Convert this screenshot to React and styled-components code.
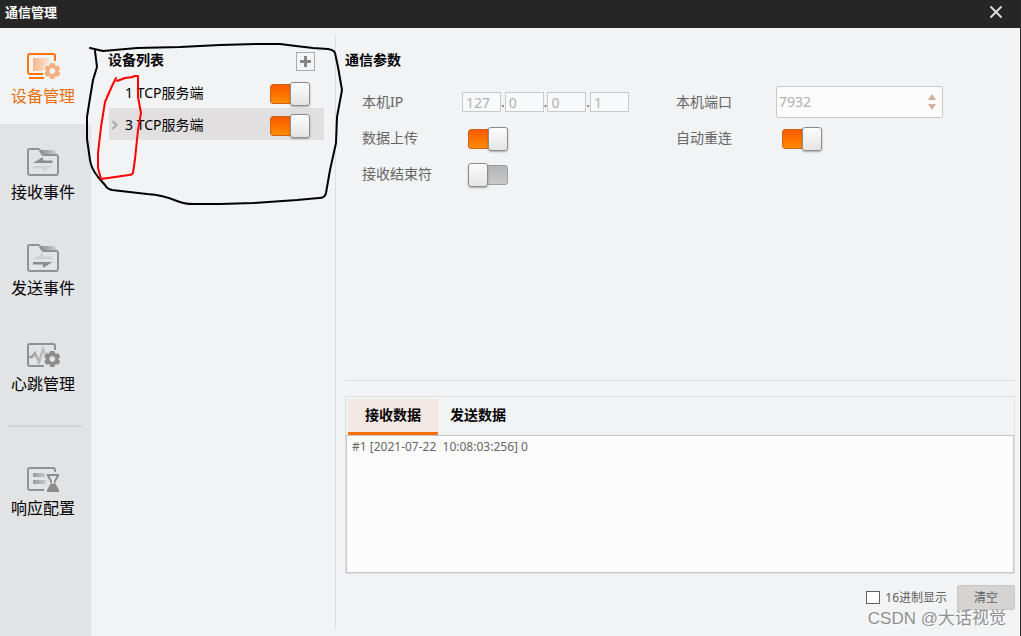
import React, { useState } from 'react'
import styled, { createGlobalStyle, css } from 'styled-components'

const GlobalStyle = createGlobalStyle`
  * {
    box-sizing: border-box;
  }

  body {
    margin: 0;
    background: #f2f3f5;
    color: #000;
    font-family: 'Noto Sans', 'Noto Sans CJK SC', sans-serif;
    font-size: 14px;
    line-height: 20px;
  }

  button,
  input,
  textarea {
    font: inherit;
    color: inherit;
  }
`

const Window = styled.div`
  position: relative;
  display: flex;
  flex-direction: column;
  min-height: 100vh;
  border-right: 1px solid #2b2b2b;
`

const TitleBar = styled.header`
  display: flex;
  align-items: center;
  justify-content: space-between;
  height: 28px;
  padding: 0 17px 4px 5px;
  background: #262626;
  color: #fff;
`

const WindowTitle = styled.h1`
  margin: 0;
  font-size: 13px;
  font-weight: 700;
`

const CloseButton = styled.button`
  display: flex;
  padding: 0;
  border: 0;
  background: none;
  color: #dcdcdc;
`

const Body = styled.div`
  display: flex;
  flex: 1;
`

const Sidebar = styled.nav`
  flex: none;
  width: 91px;
  background: #e2e3e5;
`

const NavItem = styled.button`
  display: flex;
  flex-direction: column;
  align-items: center;
  width: 100%;
  height: 96px;
  padding: 21px 5px 0 0;
  border: 0;
  background: none;
  font-size: 16px;
  line-height: 24px;

  svg {
    flex: none;
    margin-bottom: 4px;
  }

  ${props =>
    props.$active &&
    css`
      background: #f2f3f5;
      color: #e8700c;
    `};
`

const NavDivider = styled.hr`
  height: 2px;
  margin: 13px 9px 13px 8px;
  border: 0;
  background: #d3d4d6;
`

const DevicePanel = styled.section`
  flex: none;
  width: 245px;
  margin: 7px 0;
  padding: 14px 11px 0 17px;
  border-right: 1px solid #dddee0;
`

const PanelHeader = styled.div`
  display: flex;
  align-items: center;
  justify-content: space-between;
  height: 22px;
  margin-bottom: 5px;
  padding-right: 9px;
`

const Heading = styled.h2`
  margin: 0;
  font-size: 14px;
  font-weight: 700;
`

const AddButton = styled.button`
  display: flex;
  align-items: center;
  justify-content: center;
  width: 19px;
  height: 19px;
  margin-top: 2px;
  padding: 0;
  border: 1px solid #a9aaac;
  background: #f4f5f7;
`

const DeviceList = styled.ul`
  margin: 0 0 0 1px;
  padding: 0;
  list-style: none;
`

const DeviceRow = styled.li`
  display: flex;
  align-items: center;
  height: 32px;
  padding: 2px 13px 0 0;
  background: ${props => (props.$selected ? '#e2dfe0' : 'none')};
`

const Expander = styled.span`
  display: flex;
  width: 16px;
  padding-left: 2px;
`

const DeviceName = styled.label`
  flex: 1;
`

const Switch = styled.input.attrs({ type: 'checkbox', role: 'switch' })`
  appearance: none;
  display: flex;
  align-items: center;
  width: 40px;
  height: 20px;
  margin: 2px 1px 0 0;
  border: 1px solid #9c9c9c;
  border-radius: 3px;
  background: linear-gradient(#b4b5b8, #c9c9c8);

  &::before {
    content: '';
    flex: none;
    width: 18px;
    height: 22px;
    margin: 0 -1px;
    border: 1px solid #8c8c8c;
    border-radius: 3px;
    background: linear-gradient(#fcfcfc, #e4e4e2);
    box-shadow: 0 1px 2px rgba(0, 0, 0, 0.3);
  }

  &:checked {
    justify-content: flex-end;
    border-color: #cc6418;
    background: linear-gradient(#fb5a00, #ff8a00);
  }
`

const Main = styled.main`
  display: flex;
  flex: 1;
  flex-direction: column;
  min-width: 0;
  padding: 22px 5px 26px 9px;
`

const ParamGrid = styled.div`
  display: grid;
  grid-template-columns: 100px 214px 100px 167px;
  grid-auto-rows: 36px;
  align-items: center;
  margin-top: 14px;
  padding-left: 17px;
  color: #666;

  ${Switch} {
    margin-left: 6px;
  }
`

const IpField = styled.div`
  display: flex;
  align-items: center;
  width: 167px;
`

const IpInput = styled.input`
  flex: 1;
  min-width: 0;
  height: 20px;
  padding: 0 3px;
  border: 1px solid #c8c9cb;
  border-radius: 0;
  background: #f8f9fb;
  color: #b0b1b3;
  line-height: 18px;
`

const PortField = styled.div`
  display: flex;
  align-items: center;
  height: 32px;
  padding: 0 6px 0 2px;
  border: 1px solid #c8c8c8;
  border-radius: 2px;
  background: #fcfcfc;
`

const PortInput = styled.input`
  flex: 1;
  min-width: 0;
  padding: 0;
  border: 0;
  background: none;
  color: #b0b0b0;
`

const Stepper = styled.div`
  display: flex;
  flex-direction: column;
  gap: 4px;
`

const StepButton = styled.button`
  display: flex;
  padding: 0;
  border: 0;
  background: none;
`

const Separator = styled.hr`
  width: 100%;
  height: 1px;
  margin: auto 0 15px;
  border: 0;
  background: #dcdddf;
`

const LogPanel = styled.section`
  display: flex;
  flex-direction: column;
  height: 178px;
  border: 1px solid #dfe0e2;
`

const TabList = styled.div`
  display: flex;
  padding: 2px 2px 0;
`

const Tab = styled.button`
  height: 36px;
  padding: 0 17px 2px;
  border: 0;
  border-bottom: 3px solid transparent;
  background: none;
  font-weight: 700;

  & + & {
    padding-left: 12px;
  }

  ${props =>
    props.$active &&
    css`
      border-bottom-color: #f96f0a;
      background: #f3e8e2;
    `};
`

const Log = styled.textarea`
  flex: 1;
  padding: 1px 5px;
  border: 1px solid #c6c6c8;
  outline: 0;
  background: #fcfcfc;
  color: #666;
  font-size: 12px;
  line-height: 20px;
  resize: none;
`

const Footer = styled.footer`
  display: flex;
  align-items: center;
  justify-content: flex-end;
  margin-top: 11px;
  color: #606060;
  font-size: 12px;
`

const HexOption = styled.label`
  display: flex;
  align-items: center;
  gap: 5px;
  margin-right: 10px;
`

const Checkbox = styled.input.attrs({ type: 'checkbox' })`
  appearance: none;
  width: 14px;
  height: 13px;
  margin: 0;
  border: 1px solid #606060;
  background: #fff;
`

const ClearButton = styled.button`
  width: 58px;
  height: 25px;
  padding: 0;
  border: 1px solid #c6c6c6;
  border-radius: 2px;
  background: #d5d4d3;
`

const Watermark = styled.div`
  position: absolute;
  right: 14px;
  bottom: 5px;
  color: #8f9092;
  font-family: 'Liberation Sans', 'Noto Sans CJK SC', sans-serif;
  font-size: 17px;
  line-height: 24px;
  text-shadow: 1px 1px 0 #fff;
  pointer-events: none;
`

const Annotation = styled.svg`
  position: absolute;
  top: 0;
  left: 0;
  fill: none;
  stroke-width: 2;
  stroke-linecap: round;
  stroke-linejoin: round;
  pointer-events: none;
`

const Gear = ({ color }) => (
  <g transform="translate(26.300 22)" stroke={color}>
    <circle r="4.700" strokeWidth="3.600" />
    {[0, 60, 120, 180, 240, 300].map(angle => (
      <path key={angle} d="M-1.200 -6.800h2.400" strokeWidth="2.600" strokeLinecap="round" transform={`rotate(${angle})`} />
    ))}
  </g>
)

const DeviceIcon = () => (
  <svg width="34" height="31" viewBox="0 0 34 31" fill="none">
    <defs>
      <linearGradient id="screen">
        <stop offset="0" stopColor="#f6b98d" />
        <stop offset="1" stopColor="#fae0cf" />
      </linearGradient>
    </defs>
    <path d="M17 25H4a2 2 0 0 1-2-2V7a2 2 0 0 1 2-2h23a2 2 0 0 1 2 2v5" stroke="#fb7410" strokeWidth="2" />
    <path d="M3 29h15" stroke="#fb7410" strokeWidth="2" />
    <path d="M7 9h16v4l-5 4-1 5H7z" fill="url(#screen)" />
    <Gear color="#f5ae7e" />
  </svg>
)

const FolderIcon = ({ id, incoming }) => (
  <svg width="34" height="31" viewBox="0 0 34 31" fill="none">
    <defs>
      <linearGradient id={id}>
        <stop offset="0" stopColor="#8c8c8c" />
        <stop offset="1" stopColor="#d4d4d5" />
      </linearGradient>
    </defs>
    <path d="M14 5h12c4 0 5 3 6 7l-3-2H18z" fill={`url(#${id})`} />
    <path
      d="M4 4h8.500c2.500 0 2 6 5.500 6h12a2 2 0 0 1 2 2v16a2 2 0 0 1-2 2H4a2 2 0 0 1-2-2V6a2 2 0 0 1 2-2z"
      stroke="#909192"
      strokeWidth="2"
    />
    <path d="M7 18l10-6v3.500h9.500V18z" fill={incoming ? '#8c8c8c' : '#cfd0d1'} />
    <path d="M26.500 21l-9.500 6v-3.500H7V21z" fill={incoming ? '#cfd0d1' : '#8c8c8c'} />
  </svg>
)

const HeartbeatIcon = () => (
  <svg width="34" height="31" viewBox="0 0 34 31" fill="none">
    <defs>
      <linearGradient id="pulse">
        <stop offset="0" stopColor="#999" />
        <stop offset="1" stopColor="#cfcfd0" />
      </linearGradient>
    </defs>
    <path d="M18 29H4a2 2 0 0 1-2-2V9a2 2 0 0 1 2-2h23a2 2 0 0 1 2 2v4" stroke="#909192" strokeWidth="2" />
    <path d="M3 20h3l3-4 4 9 4-13 3 8 3-5" stroke="url(#pulse)" strokeWidth="2.500" />
    <Gear color="#8c8c8c" />
  </svg>
)

const ResponseIcon = () => (
  <svg width="34" height="31" viewBox="0 0 34 31" fill="none">
    <defs>
      <linearGradient id="bars">
        <stop offset="0" stopColor="#999" />
        <stop offset="1" stopColor="#cfcfd0" />
      </linearGradient>
    </defs>
    <path d="M18 29H4a2 2 0 0 1-2-2V9a2 2 0 0 1 2-2h23a2 2 0 0 1 2 2v2" stroke="#909192" strokeWidth="2" />
    <path d="M7 12h11l2 4H7zM7 19h14l-2 4H7z" fill="url(#bars)" />
    <path d="M21 13h12v2l-4 7 4 7v2H21v-2l4-7-4-7z" fill="#8c8c8c" />
    <path d="M23.500 15h7L28 20v3h-2v-3z" fill="#e2e3e5" />
  </svg>
)

const navItems = [
  { label: '设备管理', icon: <DeviceIcon /> },
  { label: '接收事件', icon: <FolderIcon id="folderIn" incoming /> },
  { label: '发送事件', icon: <FolderIcon id="folderOut" /> },
  { label: '心跳管理', icon: <HeartbeatIcon /> },
]

const devices = [
  { id: 1, name: 'TCP服务端' },
  { id: 3, name: 'TCP服务端' },
]

const App = () => {
  const [tab, setTab] = useState('receive')

  return (
    <Window>
      <GlobalStyle />
      <TitleBar>
        <WindowTitle>通信管理</WindowTitle>
        <CloseButton aria-label="关闭">
          <svg width="14" height="14" viewBox="0 0 14 14" stroke="currentColor" strokeWidth="2">
            <path d="M1.500 1.500l11 11M12.500 1.500l-11 11" />
          </svg>
        </CloseButton>
      </TitleBar>

      <Body>
        <Sidebar>
          {navItems.map((item, i) => (
            <NavItem key={item.label} $active={i === 0}>
              {item.icon}
              <span>{item.label}</span>
            </NavItem>
          ))}
          <NavDivider />
          <NavItem>
            <ResponseIcon />
            <span>响应配置</span>
          </NavItem>
        </Sidebar>

        <DevicePanel>
          <PanelHeader>
            <Heading>设备列表</Heading>
            <AddButton aria-label="添加设备">
              <svg width="11" height="11" viewBox="0 0 11 11" stroke="#858585" strokeWidth="3">
                <path d="M5.500 0v11M0 5.500h11" />
              </svg>
            </AddButton>
          </PanelHeader>
          <DeviceList>
            {devices.map(device => (
              <DeviceRow key={device.id} $selected={device.id === 3}>
                <Expander>
                  {device.id === 3 && (
                    <svg width="8" height="10" viewBox="0 0 8 10" fill="none" stroke="#a9a9a9" strokeWidth="2">
                      <path d="M1.500 1l4 4-4 4" />
                    </svg>
                  )}
                </Expander>
                <DeviceName htmlFor={`device-${device.id}`}>
                  {device.id} {device.name}
                </DeviceName>
                <Switch id={`device-${device.id}`} defaultChecked />
              </DeviceRow>
            ))}
          </DeviceList>
        </DevicePanel>

        <Main>
          <Heading>通信参数</Heading>
          <ParamGrid>
            <label htmlFor="ip-0">本机IP</label>
            <IpField>
              {['127', '0', '0', '1'].map((part, i) => (
                <React.Fragment key={i}>
                  {i > 0 && '.'}
                  <IpInput id={`ip-${i}`} aria-label={`本机IP ${i + 1}`} defaultValue={part} disabled />
                </React.Fragment>
              ))}
            </IpField>
            <label htmlFor="port">本机端口</label>
            <PortField>
              <PortInput id="port" defaultValue="7932" disabled />
              <Stepper>
                <StepButton aria-label="增加" disabled>
                  <svg width="8" height="6" viewBox="0 0 8 6" fill="#d3b09c">
                    <path d="M0 6l4-6 4 6z" />
                  </svg>
                </StepButton>
                <StepButton aria-label="减少" disabled>
                  <svg width="8" height="6" viewBox="0 0 8 6" fill="#d3b09c">
                    <path d="M0 0l4 6 4-6z" />
                  </svg>
                </StepButton>
              </Stepper>
            </PortField>

            <label htmlFor="upload">数据上传</label>
            <Switch id="upload" defaultChecked />
            <label htmlFor="reconnect">自动重连</label>
            <Switch id="reconnect" defaultChecked />

            <label htmlFor="terminator">接收结束符</label>
            <Switch id="terminator" />
          </ParamGrid>

          <Separator />

          <LogPanel>
            <TabList role="tablist">
              <Tab
                role="tab"
                aria-selected={tab === 'receive'}
                $active={tab === 'receive'}
                onClick={() => setTab('receive')}
              >
                接收数据
              </Tab>
              <Tab
                role="tab"
                aria-selected={tab === 'send'}
                $active={tab === 'send'}
                onClick={() => setTab('send')}
              >
                发送数据
              </Tab>
            </TabList>
            <Log
              aria-label="数据"
              readOnly
              value={tab === 'receive' ? '#1 [2021-07-22  10:08:03:256] 0' : ''}
            />
          </LogPanel>

          <Footer>
            <HexOption>
              <Checkbox />
              16进制显示
            </HexOption>
            <ClearButton>清空</ClearButton>
          </Footer>
        </Main>
      </Body>

      <Watermark>CSDN @大话视觉</Watermark>

      <Annotation width="350" height="210" viewBox="0 0 350 210">
        <path
          stroke="#000"
          d="M90 48L103 51L137 48L180 47L220 45L257 44H280L296 46L313 48L328 49Q334 50 335 53L338 67L342 90L337 117L336 143L330 170L326 193Q325 198 319 198L297 200L253 203L220 204H193Q184 204 177 201Q163 195 147 194L112 190Q107 189 105 185L98 177Q91 168 90 160L87 139V117L90 98L93 80L97 67L95 51"
        />
        <path
          stroke="#f00"
          d="M117 81L125 78L133 77L134 76H138L138 97L141 113L138 130L135 159L133 173Q132 175 129 175L101 179L98 168V153L101 127L105 102L112 86L116 78"
        />
      </Annotation>
    </Window>
  )
}

export default App
